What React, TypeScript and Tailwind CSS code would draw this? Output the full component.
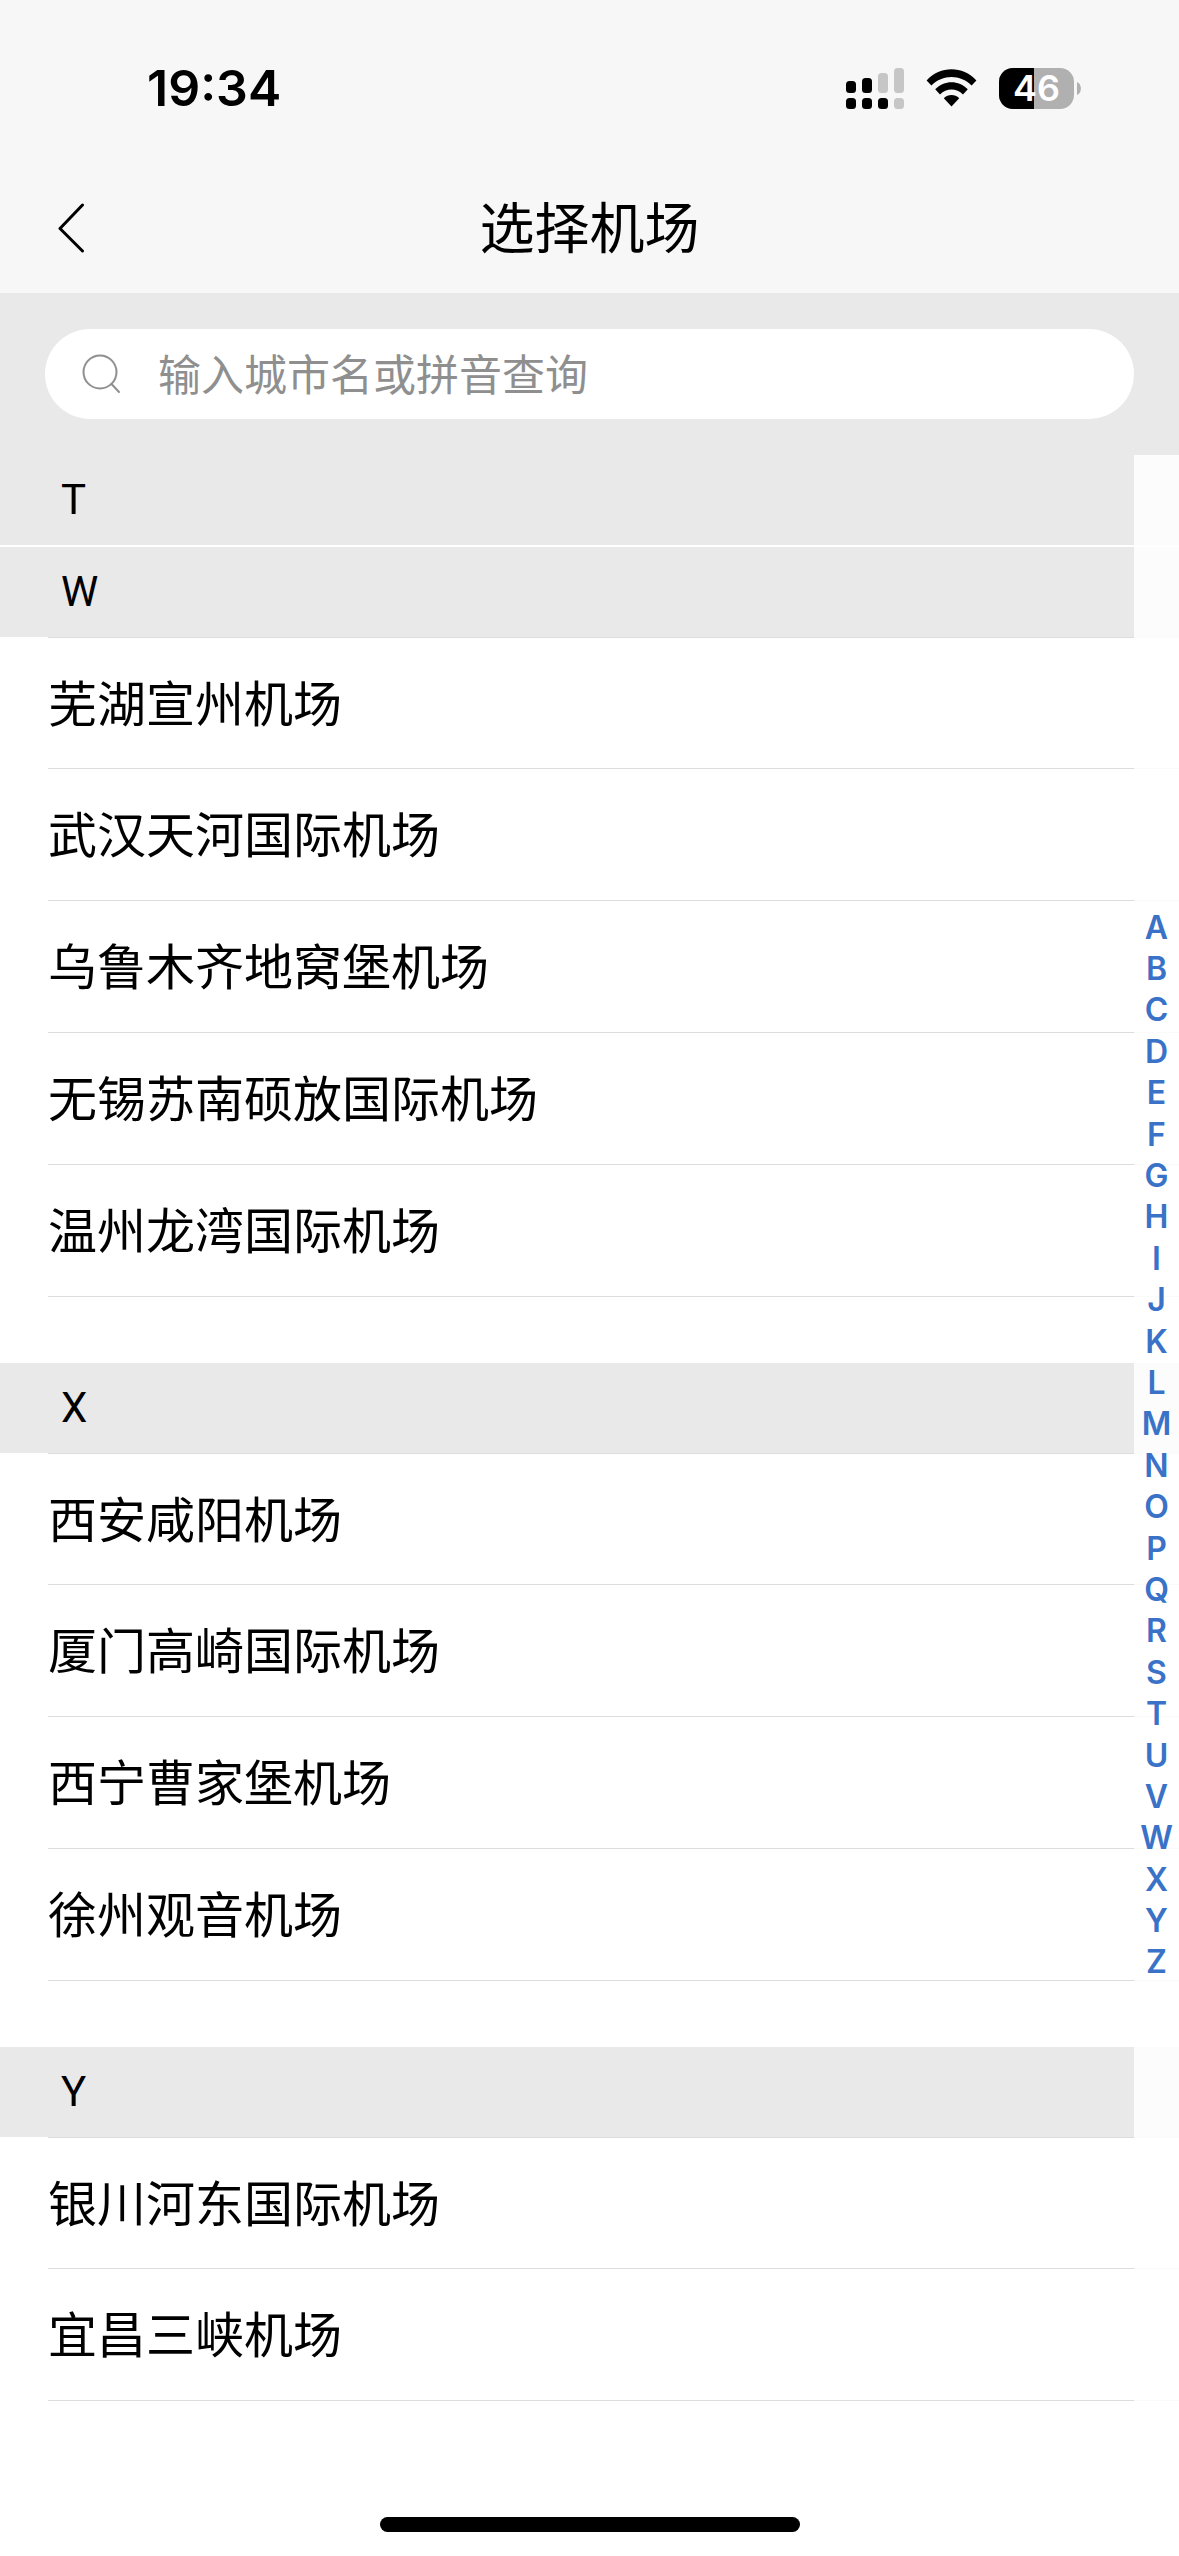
import { useState } from "react";

interface Section {
  letter: string;
  airports: string[];
}

const sections: Section[] = [
  {
    letter: "W",
    airports: [
      "芜湖宣州机场",
      "武汉天河国际机场",
      "乌鲁木齐地窝堡机场",
      "无锡苏南硕放国际机场",
      "温州龙湾国际机场",
    ],
  },
  {
    letter: "X",
    airports: [
      "西安咸阳机场",
      "厦门高崎国际机场",
      "西宁曹家堡机场",
      "徐州观音机场",
    ],
  },
  {
    letter: "Y",
    airports: ["银川河东国际机场", "宜昌三峡机场"],
  },
];

const letters = "ABCDEFGHIJKLMNOPQRSTUVWXYZ".split("");

function SignalIcon() {
  return (
    <svg width="58" height="41" viewBox="0 0 58 41" aria-hidden="true">
      <g fill="#000">
        <rect x="0" y="13" width="10" height="12" rx="3.5" />
        <rect x="16" y="10" width="10" height="15" rx="3.5" />
        <rect x="0" y="30" width="10" height="11" rx="3.5" />
        <rect x="16" y="30" width="10" height="11" rx="3.5" />
        <rect x="32" y="30" width="10" height="11" rx="3.5" />
      </g>
      <g fill="#c6c6c6">
        <rect x="32" y="5" width="10" height="20" rx="3.5" />
        <rect x="48" y="0" width="10" height="25" rx="3.5" />
        <rect x="48" y="30" width="10" height="11" rx="3.5" />
      </g>
    </svg>
  );
}

function WifiIcon() {
  return (
    <svg width="51" height="38" viewBox="0 0 51 38" aria-hidden="true">
      <path d="M0.6 11.4C14.2 -3.4 36.8 -3.4 50.4 11.4L45.6 16.6C34.6 5.2 16.4 5.2 5.4 16.6Z" />
      <path d="M9.2 20.3C18.2 10.9 32.8 10.9 41.8 20.3L37 25.4C30.6 18.9 20.4 18.9 14 25.4Z" />
      <path d="M17.8 29.3C22 24.9 29 24.9 33.2 29.3L25.5 37.6Z" />
    </svg>
  );
}

function Battery() {
  return (
    <div className="flex items-center gap-[3px]">
      <div className="relative flex h-[41px] w-[75px] items-center justify-center overflow-hidden rounded-[14px] bg-[#b0b0b0]">
        <div className="absolute inset-y-0 left-0 w-[35px] bg-black" />
        <span className="relative text-[36px] leading-none font-semibold text-white">
          46
        </span>
      </div>
      <svg width="4" height="13" viewBox="0 0 4 13" aria-hidden="true">
        <path d="M0 0C5.2 2 5.2 11 0 13Z" fill="#b0b0b0" />
      </svg>
    </div>
  );
}

function StatusBar() {
  return (
    <div className="flex h-[161px] items-center justify-between pt-[15px] pr-[98px] pl-[147px] font-['Inter',sans-serif]">
      <span className="text-[50px] leading-none font-semibold">19:34</span>
      <div className="flex items-center gap-[22px]">
        <SignalIcon />
        <WifiIcon />
        <Battery />
      </div>
    </div>
  );
}

function NavBar() {
  return (
    <div className="grid h-[132px] grid-cols-[1fr_auto_1fr] items-center">
      <button type="button" aria-label="返回" className="w-fit pl-[57px]">
        <svg
          width="28"
          height="52"
          viewBox="0 0 28 52"
          fill="none"
          stroke="#000"
          strokeWidth="3"
          strokeLinecap="round"
          strokeLinejoin="round"
        >
          <path d="M25.500 4L3 27.500L25.500 50" />
        </svg>
      </button>
      <h1 className="pb-1.5 text-[55px] leading-none">选择机场</h1>
    </div>
  );
}

function SectionHeader({ letter }: { letter: string }) {
  return (
    <h2 className="flex h-[90px] items-center bg-[#e9e9e9] pl-[61px] font-['Roboto',sans-serif] text-[42px] leading-none">
      {letter}
    </h2>
  );
}

export default function App() {
  const [query, setQuery] = useState("");

  return (
    <div className="flex min-h-screen flex-col bg-white font-['Noto_Sans_CJK_SC',sans-serif] text-black">
      <header className="bg-[#f7f7f7]">
        <StatusBar />
        <NavBar />
      </header>

      <div className="bg-[#e9e9e9] px-[45px] py-9">
        <label className="flex h-[90px] items-center rounded-full bg-white pl-[37px]">
          <svg
            width="40"
            height="40"
            viewBox="0 0 40 40"
            fill="none"
            stroke="#8f8f8f"
            strokeWidth="2"
            strokeLinecap="round"
            aria-hidden="true"
          >
            <circle cx="18" cy="18" r="16.5" />
            <path d="M29.500 30L37 38" />
          </svg>
          <input
            type="text"
            value={query}
            onChange={(e) => setQuery(e.target.value)}
            placeholder="输入城市名或拼音查询"
            aria-label="输入城市名或拼音查询"
            className="ml-9 h-full min-w-0 flex-1 pb-1 text-[43px] outline-none placeholder:text-[#8f8f8f]"
          />
        </label>
      </div>

      <main className="relative flex-1">
        <SectionHeader letter="T" />
        <div className="mt-0.5 flex flex-col gap-[66px]">
          {sections.map(({ letter, airports }) => (
            <section key={letter}>
              <SectionHeader letter={letter} />
              <ul className="ml-12 text-[49px] leading-none">
                {airports.map((name) => (
                  <li
                    key={name}
                    className="flex h-[132px] items-center border-b border-[#dcdcdc] pb-1.5 first:border-t"
                  >
                    {name}
                  </li>
                ))}
              </ul>
            </section>
          ))}
        </div>

        {/* A-Z index, floats over the right edge of the list */}
        <nav className="absolute inset-y-0 right-0 w-[45px] bg-white/85 pt-[452px] font-['Inter',sans-serif]">
          <ul className="flex h-[1076px] flex-col text-[32px] leading-none font-semibold text-[#3a72c8]">
            {letters.map((letter) => (
              <li key={letter} className="flex flex-1 items-center justify-center">
                {letter}
              </li>
            ))}
          </ul>
        </nav>
      </main>

      {/* Home indicator */}
      <div className="fixed inset-x-0 bottom-6 flex justify-center">
        <div className="h-[15px] w-[420px] rounded-full bg-black" />
      </div>
    </div>
  );
}
